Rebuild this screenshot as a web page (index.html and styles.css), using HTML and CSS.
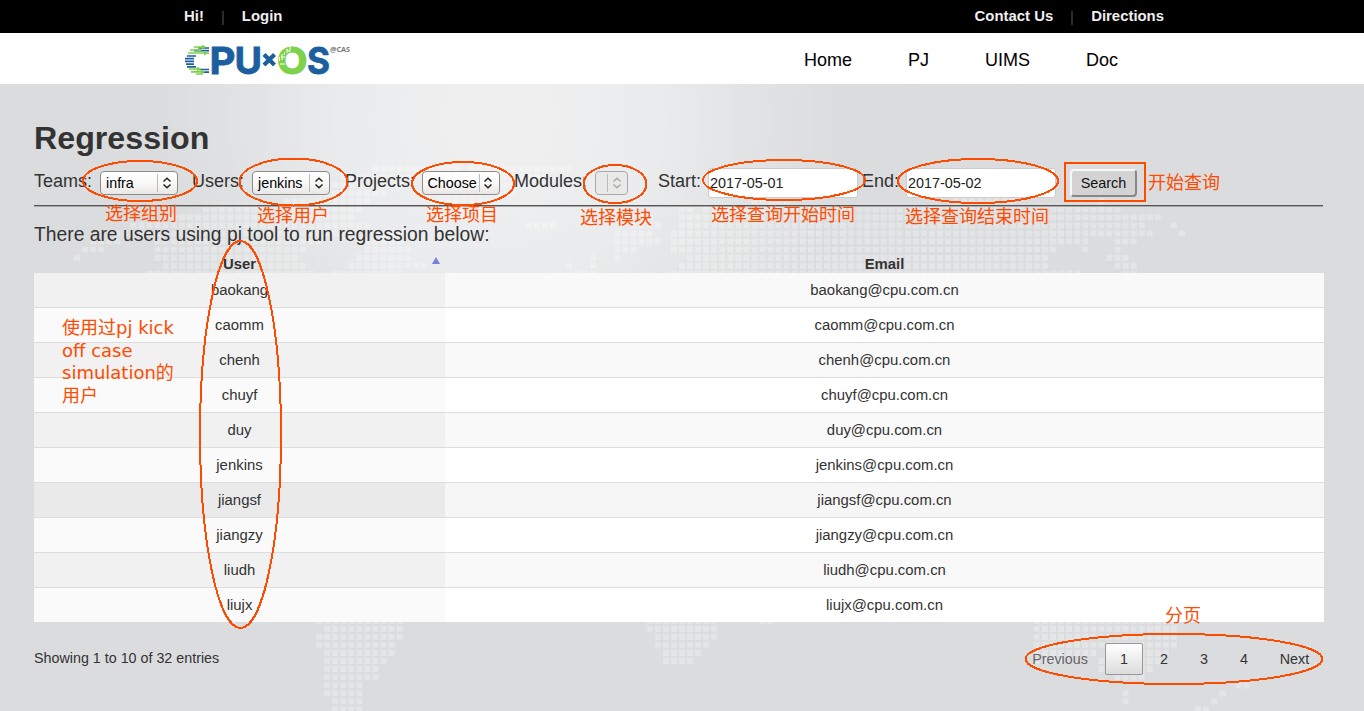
FILE: index.html
```html
<!DOCTYPE html>
<html lang="en">
<head>
<meta charset="utf-8">
<title>Regression</title>
<link rel="stylesheet" href="styles.css">
</head>
<body>
<div class="topbar">
  <div class="wrap topbar-in">
    <div class="links"><a>Hi!</a><i></i><a>Login</a></div>
    <div class="links"><a>Contact Us</a><i></i><a>Directions</a></div>
  </div>
</div>
<header class="header">
  <div class="wrap header-in">
    <svg class="logo" width="168" height="36" viewBox="184 42 168 36">
      <g fill="none" stroke-width="1.7">
        <path stroke="#1c5f9f" d="M198 48H209M194 50.7H209M187 56H196M185 58.7H194M185 61.4H194M186 64.1H194M187 66.8H196M199 69.5H209M201 72.2H209"/>
        <path stroke="#7ed24b" d="M194 47H205M190 50H200M188 53H209M189 69H200M191 71.8H203M196 74H203"/>
      </g>
      <path fill="#7ed24b" d="M202 44.500l4 2.500-4 2.500zM198 47.500l4 2.500-4 2.500zM204 50.500l4 2.500-4 2.500zM197 66.500l4 2.500-4 2.500zM201 69.300l4 2.500-4 2.500z"/>
      <g class="logo-text">
        <text x="209.500" y="73.500" textLength="26" lengthAdjust="spacingAndGlyphs">P</text>
        <text x="234.500" y="73.500" textLength="27.500" lengthAdjust="spacingAndGlyphs">U</text>
        <text class="green" x="277" y="73.500" textLength="30.500" lengthAdjust="spacingAndGlyphs">O</text>
        <text x="307" y="73.500" textLength="23" lengthAdjust="spacingAndGlyphs">S</text>
      </g>
      <path stroke="#1c5f9f" stroke-width="4.200" d="M264 54.500L274.500 65M274.500 54.500L264 65"/>
      <path stroke="#fff" stroke-width="1" fill="none" d="M279.500 61v-4M282 60v-6M284.500 55v-3M287 53v-4M290 51v-4M280 64h5M281 57h4M286 49l4 3"/>
      <text class="cas" x="330" y="51.500" textLength="20" lengthAdjust="spacingAndGlyphs">@CAS</text>
    </svg>
    <nav class="nav"><a>Home</a><a>PJ</a><a>UIMS</a><a>Doc</a></nav>
  </div>
</header>
<main class="main">
  <svg class="map" width="1364" height="627" viewBox="0 84 1364 627">
    <g transform="translate(74 257.7) scale(8.066)">
      <path d="M37-11h11M49-11h13M33-10h10M45-10h14M32-9h9M45-9h12M30-8h9M45-8h10M26-7h11M45-7h8M84-7h5M109-7h8M127-7h1
      M16-6h20M44-6h7M75-6h2M78-6h52M12-5h23M45-5h5M70-5h2M75-5h60M7-4h30M56-4h4M69-4h4M75-4h58M136-4h1
      M5-3h30M38-3h4M67-3h5M74-3h60M137-3h1M2-2h4M10-2h21M36-2h5M67-2h6M74-2h52M129-2h3M1-1h3M10-1h19M36-1h6M67-1h3M74-1h48M125-1h1M129-1h1
      M0 0h1M10 0h18M35 0h7M64 0h1M67 0h1M76 0h45M128 0h3M11 1h18M34 1h10M61 1h1M64 1h1M75 1h46M129 1h3M9 2h21M32 2h9M62 2h3M74 2h51M130 2h2
      M30 45h11M71 45h9M85 45h2M119 45h18M31 46h10M71 46h9M119 46h18M30 47h11M72 47h8M119 47h18M30 48h10M72 48h7M119 48h18
      M31 49h9M73 49h5M119 49h8M128 49h8M31 50h8M73 50h4M119 50h4M127 50h8M31 51h7M127 51h7M31 52h7M129 52h4M31 53h5M144 53h2M31 54h5M130 54h1M142 54h1M32 55h4M130 55h1M141 55h1M32 56h4M139 56h2"/>
    </g>
  </svg>
  <h1>Regression</h1>
  <form class="filters">
    <label>Teams:</label><div class="select">infra<b><svg width="10" height="12"><path d="M1.500 4.500L5 1.200 8.500 4.500M1.500 7.500L5 10.800 8.500 7.500"/></svg></b></div>
    <label>Users:</label><div class="select">jenkins<b><svg width="10" height="12"><path d="M1.500 4.500L5 1.200 8.500 4.500M1.500 7.500L5 10.800 8.500 7.500"/></svg></b></div>
    <label>Projects:</label><div class="select">Choose<b><svg width="10" height="12"><path d="M1.500 4.500L5 1.200 8.500 4.500M1.500 7.500L5 10.800 8.500 7.500"/></svg></b></div>
    <label>Modules:</label><div class="select disabled"><b><svg width="10" height="12"><path d="M1.500 4.500L5 1.200 8.500 4.500M1.500 7.500L5 10.800 8.500 7.500"/></svg></b></div>
    <label>Start:</label><input value="2017-05-01">
    <label>End:</label><input value="2017-05-02">
    <button type="button">Search</button>
  </form>
  <hr>
  <p class="intro">There are users using pj tool to run regression below:</p>
  <table>
    <thead><tr><th class="sorted">User<span class="arrow"></span></th><th>Email</th></tr></thead>
    <tbody>
      <tr><td>baokang</td><td>baokang@cpu.com.cn</td></tr>
      <tr><td>caomm</td><td>caomm@cpu.com.cn</td></tr>
      <tr><td>chenh</td><td>chenh@cpu.com.cn</td></tr>
      <tr><td>chuyf</td><td>chuyf@cpu.com.cn</td></tr>
      <tr><td>duy</td><td>duy@cpu.com.cn</td></tr>
      <tr><td>jenkins</td><td>jenkins@cpu.com.cn</td></tr>
      <tr class="hover"><td>jiangsf</td><td>jiangsf@cpu.com.cn</td></tr>
      <tr><td>jiangzy</td><td>jiangzy@cpu.com.cn</td></tr>
      <tr><td>liudh</td><td>liudh@cpu.com.cn</td></tr>
      <tr><td>liujx</td><td>liujx@cpu.com.cn</td></tr>
    </tbody>
  </table>
  <div class="foot">
    <span>Showing 1 to 10 of 32 entries</span>
    <div class="pages"><a class="off">Previous</a><a class="current">1</a><a>2</a><a>3</a><a>4</a><a class="next">Next</a></div>
  </div>
</main>
<svg class="notes" width="1364" height="711">
  <g class="marks">
    <ellipse cx="140" cy="181" rx="57" ry="20"/>
    <ellipse cx="293.500" cy="182" rx="54" ry="23.500"/>
    <ellipse cx="463" cy="183.500" rx="51" ry="21.500"/>
    <ellipse cx="615" cy="184" rx="31.500" ry="19"/>
    <ellipse cx="784" cy="180" rx="81" ry="20"/>
    <ellipse cx="978" cy="181" rx="80" ry="22"/>
    <ellipse cx="240.500" cy="434.500" rx="40.500" ry="193.500"/>
    <ellipse cx="1174" cy="659" rx="148.500" ry="25"/>
    <rect x="1065" y="163" width="80" height="38"/>
  </g>
  <text x="105" y="220">选择组别</text>
  <text x="257" y="222">选择用户</text>
  <text x="426" y="221">选择项目</text>
  <text x="580" y="224">选择模块</text>
  <text x="711" y="221">选择查询开始时间</text>
  <text x="905" y="223">选择查询结束时间</text>
  <text x="1148" y="189">开始查询</text>
  <text x="1165" y="622">分页</text>
  <text x="62" y="334">使用过pj kick</text>
  <text x="62" y="357">off case</text>
  <text x="62" y="379">simulation的</text>
  <text x="62" y="402">用户</text>
</svg>
</body>
</html>
```
FILE: styles.css
```css
* { box-sizing: border-box; }
body { margin: 0; width: 1364px; height: 711px; overflow: hidden; position: relative; font-family: "Liberation Sans", Arial, sans-serif; font-size: 14.900px; color: #333; background: #dbdcde; }
.wrap { width: 996px; margin: 0 auto; display: flex; justify-content: space-between; }
.topbar { height: 33px; background: #000; color: #eee; font-weight: bold; }
.topbar-in { line-height: 33px; padding-right: 16px; }
.links { display: flex; align-items: center; }
.links i { width: 2px; height: 14px; background: #2b2b2b; margin: 2px 18px 0; }
.header { height: 51px; background: #fff; }
.header-in { padding-right: 62px; }
.logo { margin-top: 9px; overflow: visible; }
.logo-text { font: 700 37.500px Inter, sans-serif; fill: #1c5f9f; stroke: #1c5f9f; stroke-width: .8px; }
.logo-text .green { fill: #7ed24b; stroke: #7ed24b; stroke-width: 1.200px; }
.cas { font: bold 7.500px "Open Sans", sans-serif; fill: #777; }
.nav { display: flex; gap: 56px; font-size: 18px; line-height: 54px; color: #000; }
.main { position: relative; height: 627px; padding: 35px 40px 0 34px; background: radial-gradient(circle at 500px 35px, #f0f0f1 0, #ebeced 150px, #e2e3e4 250px, #dbdcde 345px); }
.main > * { position: relative; }
.main > .map { position: absolute; left: 0; top: 0; }
.map path { stroke: #fff; stroke-opacity: .27; stroke-width: .74; stroke-dasharray: .74 .26; }
h1 { margin: 0; font-size: 32.200px; line-height: 38px; height: 49px; }
.filters { display: grid; grid-template-columns: 66px 92px 60px 93px 76.500px 92.500px 81px 63px 50px 154px 44px 164px 67px; height: 30px; font-size: 18px; align-items: start; }
.filters label { line-height: 26px; white-space: nowrap; }
.select { margin-top: 3px; width: 78px; height: 24px; border: 1px solid #8f8c88; border-radius: 4px; background: linear-gradient(#fff, #f9f9f8 50%, #e8e7e5); display: flex; justify-content: space-between; padding-left: 5px; font-size: 14.300px; line-height: 23px; color: #000; }
.select b { width: 20px; margin: 2px 0; border-left: 1px solid #bbb; display: flex; align-items: center; justify-content: center; padding-right: 2px; }
.select path { fill: none; stroke: #222; stroke-width: 1.500; }
.select.disabled { width: 33px; padding-left: 0; justify-content: flex-end; background: #e9e9e8; border-color: #aaa; }
.disabled path { stroke: #aaa; }
input { width: 150px; height: 30px; padding: 0 1px; border: 1px solid #ccc; border-radius: 3px; background: #fff; font: 14.400px "Liberation Sans", sans-serif; color: #222; }
button { width: 67px; height: 28px; margin-top: 1px; padding: 0; border: 2px solid; border-color: #f7f7f7 #888 #888 #f7f7f7; border-radius: 4px; background: #d3d3d3; font: 14.400px "Liberation Sans", sans-serif; color: #111; }
hr { margin: 7px 0 0; width: 1289px; height: 2px; border: 0; border-top: 1px solid #555; border-bottom: 1px solid #aaa; }
.intro { margin: 16px 0 0; font-size: 19.300px; line-height: 24px; }
table { width: 1290px; margin-top: 8px; border-collapse: separate; border-spacing: 0; table-layout: fixed; text-align: center; }
th { height: 18px; padding: 0; line-height: 18px; }
.sorted { width: 411px; position: relative; }
.arrow { position: absolute; right: 5px; top: 2px; border: 4.500px solid transparent; border-top: 0; border-bottom: 7px solid #7b7fdc; }
td { height: 35px; padding: 0; line-height: 34px; background: #fff; border-top: 1px solid #ddd; }
td:first-child { background: #fafafa; }
tr:nth-child(odd) td { background: #f9f9f9; }
tr:nth-child(odd) td:first-child { background: #f1f1f1; }
tr.hover:nth-child(odd) td { background: #f6f6f6; }
tr.hover:nth-child(odd) td:first-child { background: #eaeaea; }
tbody tr:first-child td { height: 34px; border: 0; }
.foot { display: flex; justify-content: space-between; width: 1290px; padding-top: 21px; font-size: 14.300px; line-height: 31px; }
.pages { display: flex; gap: 2px; }
.pages a { width: 38px; height: 32px; line-height: 32px; text-align: center; }
.pages .off { width: 86px; color: #666; }
.pages .current { border: 1px solid #979797; border-radius: 2px; background: linear-gradient(#fff, #dcdcdc); line-height: 30px; }
.pages .next { width: 59px; }
.notes { position: absolute; left: 0; top: 0; pointer-events: none; }
.marks { fill: none; stroke: #ff4b00; stroke-width: 2; shape-rendering: crispEdges; }
.notes text { font: 400 18px "DejaVu Sans", "Noto Sans CJK SC", sans-serif; fill: #ff4b00; }
```
